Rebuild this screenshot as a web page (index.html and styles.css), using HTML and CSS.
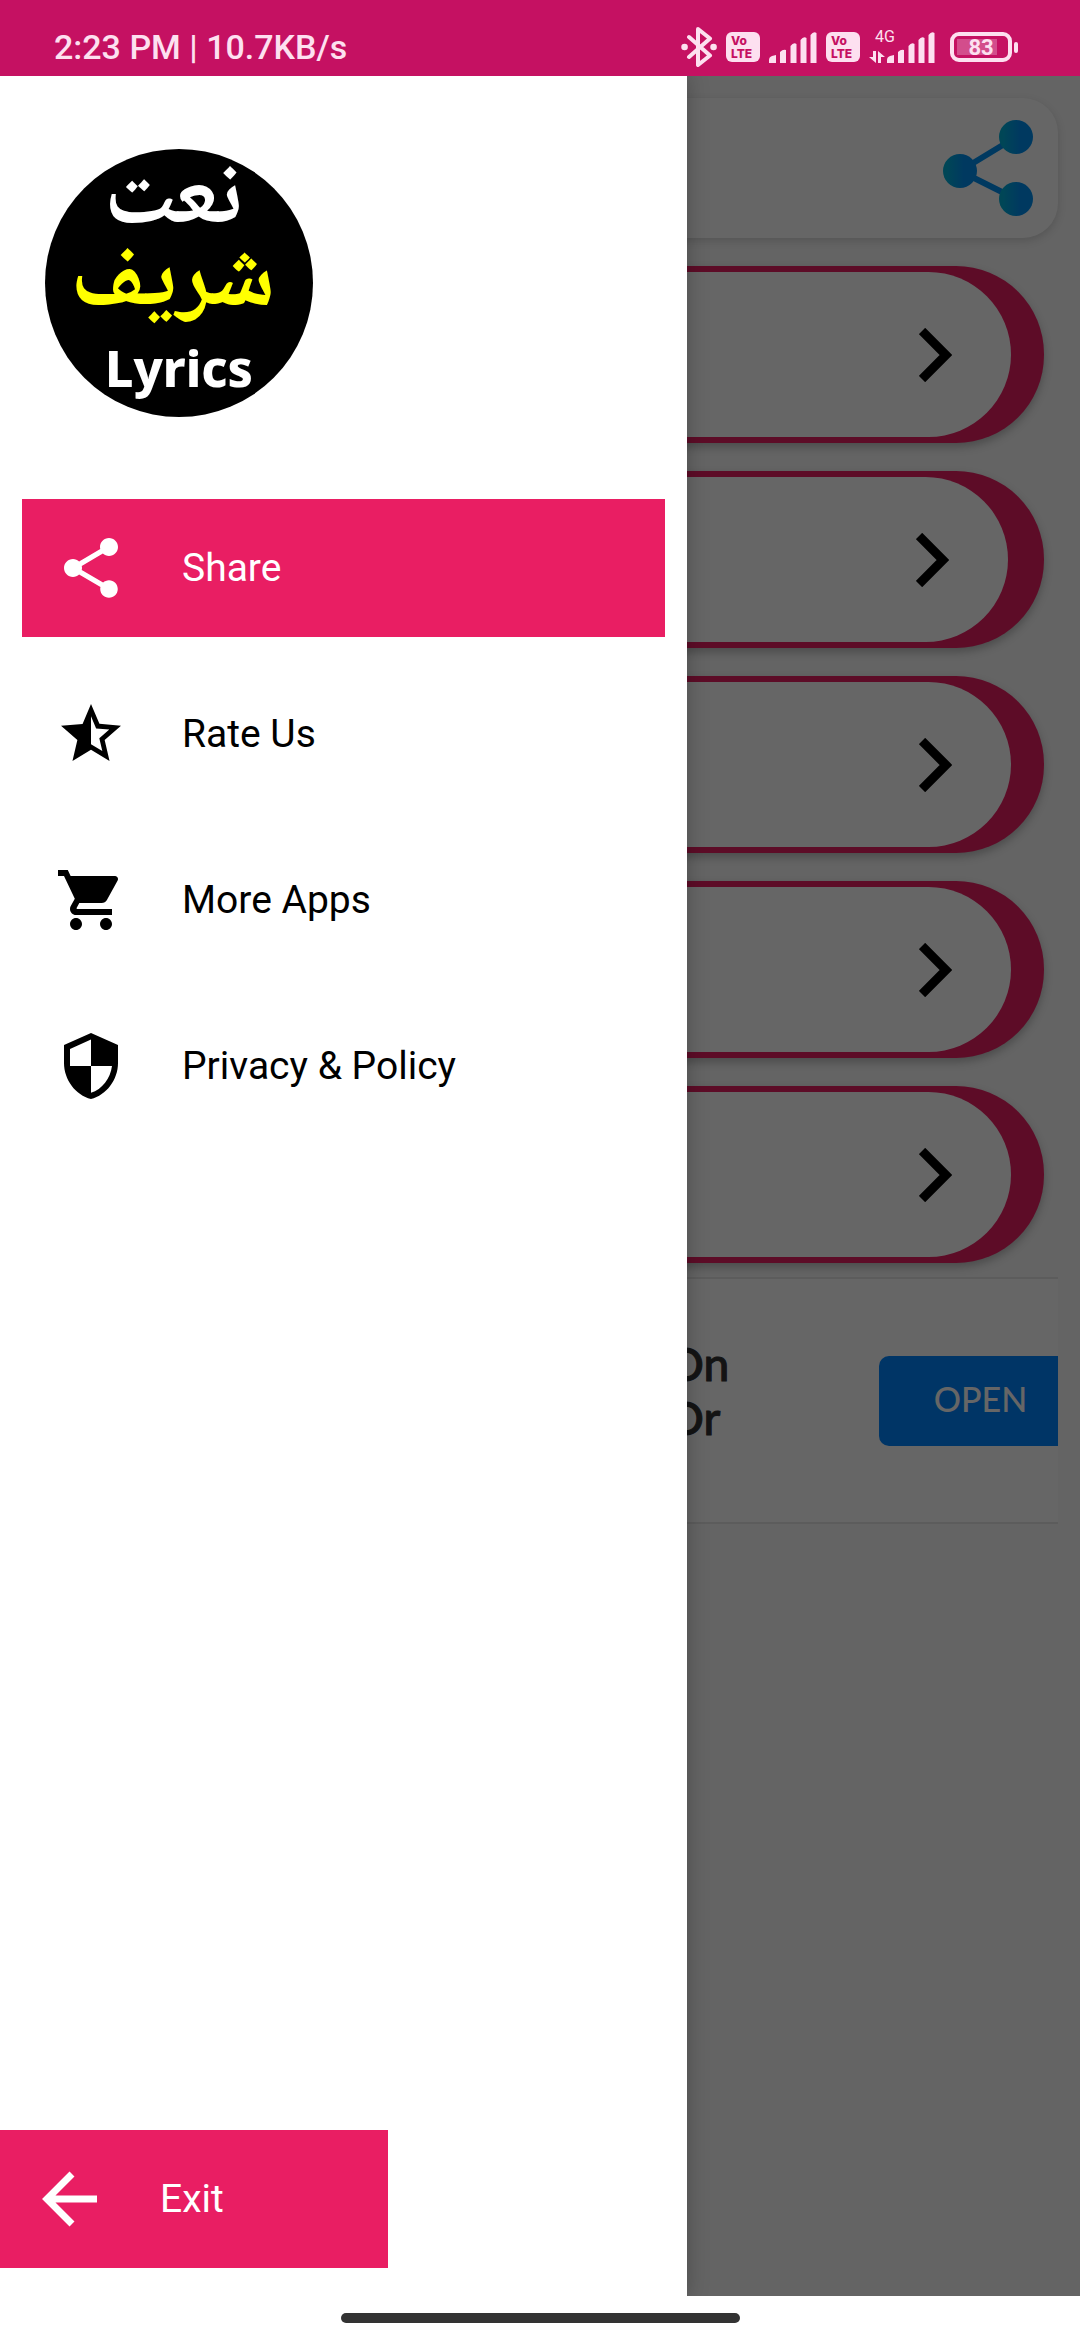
FILE: index.html
```html
<!DOCTYPE html>
<html lang="en">
<head>
<meta charset="utf-8">
<meta name="viewport" content="width=device-width, initial-scale=1">
<title>Naat Sharif Lyrics</title>
<link rel="stylesheet" href="styles.css">
</head>
<body>
<svg class="defs" width="0" height="0" aria-hidden="true">
  <defs>
    <linearGradient id="blue"><stop offset="0.1" stop-color="#00b0d8"/><stop offset="0.6" stop-color="#0090f0"/></linearGradient>
    <symbol id="bars" viewBox="0 0 48 31">
      <path d="M0 31v-3q0-3 3-4l4-1v8zM11 31V20q3-3 6-2v13zM21.500 31V14q3-4 6-2v19zM31.500 31V8q3-4 6-2v25zM41.500 31V3q3-4 6-2v30z" fill="currentColor"/>
    </symbol>
    <symbol id="chevron" viewBox="0 0 33 54">
      <path d="M3 3L27 27L3 51" fill="none" stroke="#000" stroke-width="9"/>
    </symbol>
  </defs>
</svg>

<header class="status">
  <span class="status-time">2:23 PM | 10.7KB/s</span>
  <div class="status-icons">
    <svg class="bluetooth" width="36" height="40" viewBox="0 0 36 40" fill="none" stroke="currentColor" stroke-width="4" stroke-linejoin="round" stroke-linecap="round">
      <path d="M8 10l21 18.500L17 38V2l12 9.500L8 30"/><path d="M3.500 20h.1M32.500 20h.1" stroke-width="6.500"/>
    </svg>
    <span class="volte"><span>Vo</span><span>LTE</span></span>
    <svg class="bars" width="48" height="31"><use href="#bars"/></svg>
    <span class="volte"><span>Vo</span><span>LTE</span></span>
    <div class="data">
      <span class="data-type">4G</span>
      <svg width="18" height="12" viewBox="0 0 18 12" fill="currentColor"><path d="M4 0h3v12L0 6h4zM9 0l7 6h-4v6H9z"/></svg>
      <svg class="bars" width="48" height="31"><use href="#bars"/></svg>
    </div>
    <div class="battery"><span class="battery-body">83</span><span class="battery-tip"></span></div>
  </div>
</header>

<div class="stage">
  <main class="page">
    <div class="toolbar">
      <button class="plain" aria-label="Share app">
        <svg width="90" height="96" viewBox="0 0 90 96">
          <path d="M17 51L73 17M17 51l56 28" stroke="#0090f0" stroke-width="6"/>
          <g fill="url(#blue)"><circle cx="17" cy="51" r="17"/><circle cx="73" cy="17" r="17"/><circle cx="73" cy="79" r="17"/></g>
        </svg>
      </button>
    </div>
    <div class="pills">
      <button class="pill" aria-label="Open list 1"><span class="pill-face"><svg width="33" height="54"><use href="#chevron"/></svg></span></button>
      <button class="pill pill-narrow" aria-label="Open list 2"><span class="pill-face"><svg width="33" height="54"><use href="#chevron"/></svg></span></button>
      <button class="pill" aria-label="Open list 3"><span class="pill-face"><svg width="33" height="54"><use href="#chevron"/></svg></span></button>
      <button class="pill" aria-label="Open list 4"><span class="pill-face"><svg width="33" height="54"><use href="#chevron"/></svg></span></button>
      <button class="pill" aria-label="Open list 5"><span class="pill-face"><svg width="33" height="54"><use href="#chevron"/></svg></span></button>
    </div>
    <div class="ad">
      <p class="ad-text">On<br>Or</p>
      <button class="ad-open">OPEN</button>
    </div>
  </main>
  <div class="scrim"></div>
  <aside class="drawer">
    <div class="logo">
      <span class="logo-ar" lang="ur" dir="rtl">نعت</span>
      <span class="logo-ar logo-yellow" lang="ur" dir="rtl">شریف</span>
      <span class="logo-en">Lyrics</span>
    </div>
    <nav class="menu">
      <a class="item item-active" href="#share">
        <svg class="icon" viewBox="0 0 24 24"><path d="M18 16.080c-.76 0-1.440.3-1.960.77L8.910 12.700c.05-.23.09-.46.09-.7s-.04-.47-.09-.7l7.050-4.110c.54.5 1.250.81 2.040.81 1.660 0 3-1.340 3-3s-1.340-3-3-3-3 1.340-3 3c0 .24.04.47.09.7L8.040 9.810C7.500 9.310 6.790 9 6 9c-1.660 0-3 1.340-3 3s1.340 3 3 3c.79 0 1.500-.31 2.040-.81l7.120 4.160c-.05.21-.08.43-.08.65 0 1.610 1.310 2.920 2.920 2.920s2.920-1.310 2.920-2.920-1.310-2.920-2.920-2.920z"/></svg>
        <span>Share</span>
      </a>
      <a class="item" href="#rate">
        <svg class="icon" viewBox="0 0 24 24"><path d="M22 9.240l-7.190-.62L12 2 9.190 8.630 2 9.240l5.460 4.730L5.820 21 12 17.270 18.180 21l-1.630-7.030L22 9.240zM12 15.400V6.100l1.710 4.040 4.380.38-3.320 2.880 1 4.280L12 15.400z"/></svg>
        <span>Rate Us</span>
      </a>
      <a class="item" href="#more">
        <svg class="icon" viewBox="0 0 24 24"><path d="M7 18c-1.100 0-1.990.9-1.990 2S5.900 22 7 22s2-.9 2-2-.9-2-2-2zM1 2v2h2l3.600 7.590-1.350 2.450c-.16.28-.25.61-.25.96 0 1.100.9 2 2 2h12v-2H7.420c-.14 0-.25-.11-.25-.25l.03-.12.9-1.630h7.450c.75 0 1.410-.41 1.750-1.030l3.580-6.490c.08-.14.12-.31.12-.48 0-.55-.45-1-1-1H5.210l-.94-2H1zm16 16c-1.100 0-1.990.9-1.990 2s.89 2 1.990 2 2-.9 2-2-.9-2-2-2z"/></svg>
        <span>More Apps</span>
      </a>
      <a class="item" href="#privacy">
        <svg class="icon" viewBox="0 0 24 24"><path d="M12 1L3 5v6c0 5.550 3.840 10.740 9 12 5.160-1.260 9-6.450 9-12V5l-9-4zm0 10.990h7c-.53 4.120-3.280 7.790-7 8.940V12H5V6.300l7-3.110v8.800z"/></svg>
        <span>Privacy &amp; Policy</span>
      </a>
    </nav>
    <a class="item item-active exit" href="#exit">
      <svg class="icon" viewBox="0 0 72 72" fill="none" stroke="currentColor" stroke-width="7"><path d="M39 11L14 36l25 25M14 36h50" fill="none"/></svg>
      <span>Exit</span>
    </a>
  </aside>
</div>

<footer class="gesture"><span class="gesture-bar"></span></footer>
</body>
</html>
```
FILE: styles.css
```css
* { box-sizing: border-box; }

body {
  margin: 0;
  min-height: 100vh;
  display: flex;
  flex-direction: column;
  font-family: Roboto, "Noto Sans", sans-serif;
  background: #fff;
}

svg { display: block; flex: none; }
.defs { position: absolute; }

button {
  margin: 0;
  padding: 0;
  border: 0;
  font: inherit;
  cursor: pointer;
}

/* Status bar */
.status {
  height: 76px;
  padding: 18px 62px 0 54px;
  display: flex;
  align-items: center;
  justify-content: space-between;
  background: #c51162;
  color: #fde0f0;
}
.status-time { font-size: 34px; line-height: 40px; font-weight: 500; }
.status-icons { display: flex; align-items: center; gap: 9px; }
.volte {
  width: 34px;
  height: 30px;
  padding-left: 5px;
  display: flex;
  flex-direction: column;
  justify-content: center;
  border-radius: 6px;
  background: #fde0f0;
  color: #c51162;
  font: 800 12px/13px Inter, sans-serif;
}
.data { display: flex; align-items: flex-end; position: relative; }
.data-type { position: absolute; left: 6px; top: -4px; font-size: 16px; line-height: 18px; }
.battery { display: flex; align-items: center; gap: 2px; margin-left: 6px; }
.battery-body {
  width: 62px;
  height: 30px;
  border: 4px solid #fde0f0;
  border-radius: 9px;
  font-size: 22px;
  line-height: 24px;
  font-weight: 700;
  text-align: center;
  background: linear-gradient(#d34d8c, #d34d8c) 3px 3px / 40px 16px no-repeat;
}
.battery-tip { width: 4px; height: 11px; border-radius: 2px; background: #fde0f0; }

/* Page and drawer share one grid cell */
.stage { flex: 1; display: grid; overflow: hidden; }
.page, .scrim, .drawer { grid-area: 1 / 1; }
.scrim { background: rgba(0, 0, 0, 0.6); z-index: 1; }

.page {
  padding: 22px;
  background: #f9f9f9;
}
.toolbar {
  height: 140px;
  padding: 0 25px;
  display: flex;
  align-items: center;
  justify-content: flex-end;
  border-radius: 35px;
  background: #fff;
  box-shadow: 0 3px 8px rgba(0, 0, 0, 0.15);
}
.plain { background: none; }

.pills {
  padding: 28px 14px 14px;
  display: flex;
  flex-direction: column;
  gap: 28px;
}
.pill {
  height: 177px;
  padding: 6px 33px 6px 6px;
  border-radius: 88px;
  background: #e91e63;
  box-shadow: 0 4px 9px rgba(0, 0, 0, 0.25);
}
.pill-narrow { padding-right: 36px; }
.pill-face {
  height: 100%;
  padding-right: 59px;
  display: flex;
  align-items: center;
  justify-content: flex-end;
  border-radius: 83px;
  background: #fff;
}

.ad {
  height: 247px;
  display: flex;
  align-items: center;
  justify-content: space-between;
  border: solid #e6e6e6;
  border-width: 2px 0;
  background: #fff;
}
.ad-text {
  margin: 0;
  padding: 0 0 20px 645px;
  font: 500 46px/54px Lato, sans-serif;
  color: #333;
  -webkit-text-stroke: 1px #333;
}
.ad-open {
  width: 179px;
  height: 90px;
  padding: 0 0 4px 24px;
  border-radius: 10px 0 0 10px;
  background: #0084ff;
  color: #fff;
  font: 500 34px/40px Lato, sans-serif;
}

/* Drawer */
.drawer {
  z-index: 2;
  width: 63.6%;
  display: flex;
  flex-direction: column;
  background: #fff;
  box-shadow: 0 0 20px rgba(0, 0, 0, 0.25);
}
.logo {
  width: 268px;
  height: 268px;
  margin: 73px 45px 60px;
  padding-top: 14px;
  display: flex;
  flex-direction: column;
  align-items: center;
  border-radius: 50%;
  background: #000;
  color: #fff;
  line-height: 82px;
}
.logo-ar {
  padding-right: 12px;
  font-family: "Noto Naskh Arabic", "Noto Sans Arabic", "DejaVu Sans", sans-serif;
  font-size: 90px;
  font-weight: 700;
}
.logo-yellow { color: #ff0; }
.logo-en { font-family: "Noto Sans", sans-serif; font-size: 50px; font-weight: 800; }

.menu {
  padding: 22px;
  display: flex;
  flex-direction: column;
  gap: 28px;
}
.item {
  height: 138px;
  padding: 0 33px;
  display: flex;
  align-items: center;
  gap: 55px;
  color: #000;
  font-size: 39px;
  line-height: 44px;
  text-decoration: none;
}
.item-active { background: #e91e63; color: #fff; }
.icon { width: 72px; height: 72px; fill: currentColor; }
.exit { width: 388px; margin: auto 0 28px; }

.gesture {
  height: 44px;
  display: flex;
  align-items: center;
  justify-content: center;
  background: #fff;
}
.gesture-bar { width: 399px; height: 10px; border-radius: 5px; background: #333; }
```
